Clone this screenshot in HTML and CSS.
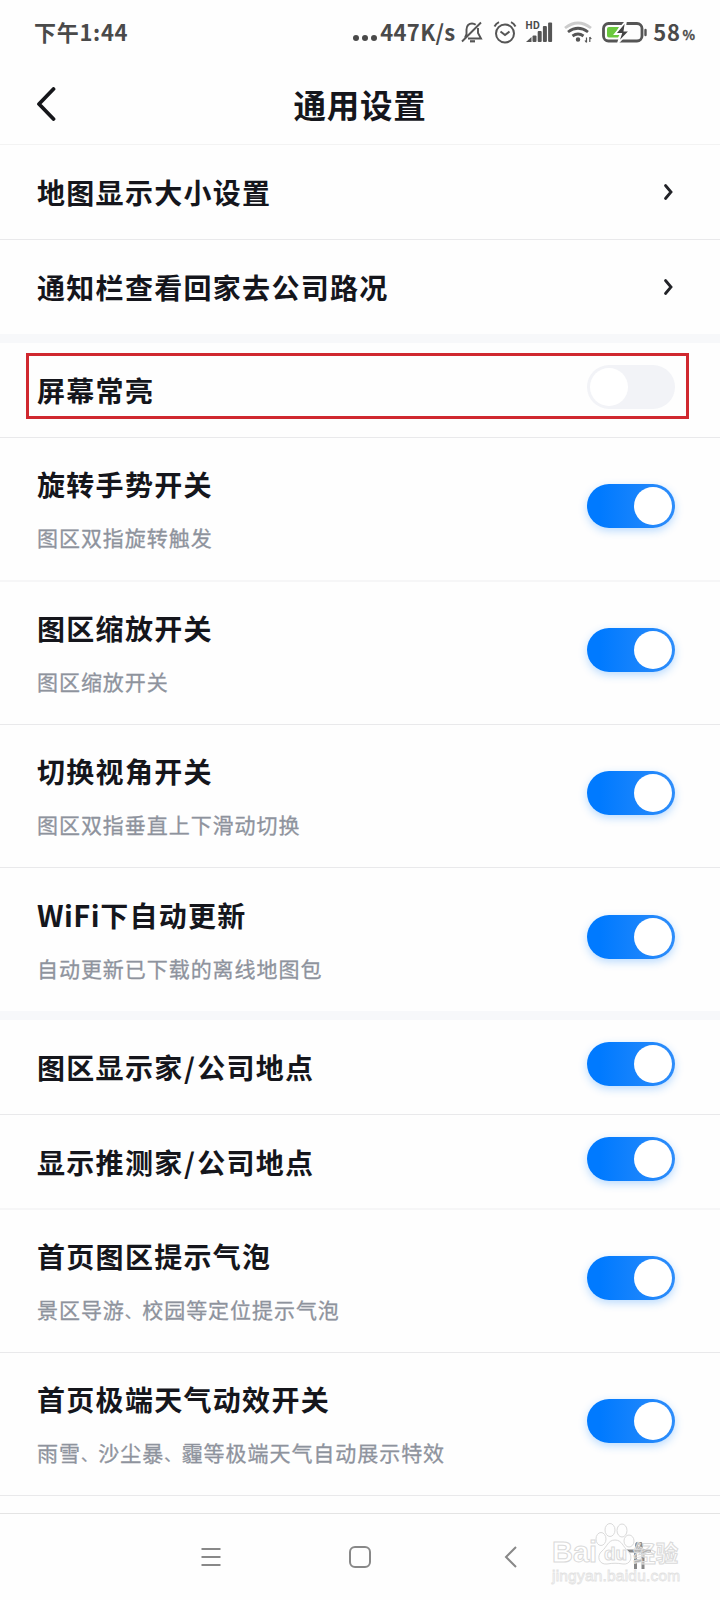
FILE: index.html
```html
<!DOCTYPE html>
<html lang="zh-CN">

<head>
    <meta charset="UTF-8">
    <meta name="viewport" content="width=device-width, initial-scale=1.0">
    <title>通用设置</title>
    <link rel="stylesheet" href="styles.css">
</head>

<body>

    <div class="status-bar">
        <span class="time">下午1:44</span>
        <div class="status-right">
            <span class="dots"><i></i><i></i><i></i></span>
            <span class="speed">447K/s</span>
            <!-- muted bell -->
            <svg class="bell" width="22" height="22" viewBox="0 0 22 22" fill="none" stroke="#555" stroke-width="1.9">
                <path d="M4 16.500L5.500 13V8.500C5.500 4.500 8 2.500 11 2.500C12.500 2.500 13.700 3 14.700 3.800M17 7V12L20 17.500H7M1 20.500L20 1.500" />
                <path d="M9 20.300H14" stroke-width="2.200" />
            </svg>
            <!-- alarm -->
            <svg class="alarm" width="24" height="23" viewBox="0 0 24 23" fill="none" stroke="#555" stroke-width="2">
                <circle cx="12" cy="12.500" r="9" />
                <path d="M1.500 5.500Q3 2.500 6 1.200M22.500 5.500Q21 2.500 18 1.200M7.500 10.500L12 14L16.500 10.500" />
            </svg>
            <div class="signal">
                <span class="hd">HD</span>
                <svg width="28" height="22" viewBox="0 0 28 22" fill="#555">
                    <path d="M1 21L6.500 16V21Z" />
                    <rect x="7.500" y="14.500" width="4" height="6.500" rx="1" />
                    <rect x="12.700" y="10" width="4" height="11" rx="1" />
                    <rect x="17.900" y="5" width="4" height="16" rx="1" />
                    <rect x="23.100" y="1.500" width="4" height="19.500" rx="1" />
                </svg>
            </div>
            <svg class="wifi" width="28" height="22" viewBox="0 0 28 22" fill="none" stroke="#555" stroke-width="2.800">
                <path d="M1 7Q14 -3 27 7" stroke="#ccc" />
                <path d="M4 11Q14 3.500 24 11M8.500 15Q14 11 19.500 15" />
                <circle cx="14" cy="18.500" r="1.500" fill="#555" stroke-width="1.500" />
                <path d="M22.500 16.500V21.500M25.800 16V21M21 19.500L22.500 21.500M27.300 18L25.800 16" stroke-width="1.200" />
            </svg>
            <svg class="battery" width="46" height="22" viewBox="0 0 46 22">
                <rect x="1.500" y="2.500" width="38.500" height="17.500" rx="5" fill="none" stroke="#555" stroke-width="2.800" />
                <path d="M7 6H17L13 13H18L16 16.500H7Q5 16.500 5 14.500V8Q5 6 7 6Z" fill="#6ac83e" />
                <path d="M24 0L13 13H19L16 22L28 9.500H22.500Z" fill="#444" stroke="#fff" stroke-width="1.800" />
                <path d="M43.500 9V14" stroke="#555" stroke-width="2.400" stroke-linecap="round" />
            </svg>
            <span class="percent">58</span><span class="unit">%</span>
        </div>
    </div>

    <div class="header">
        <svg class="back" width="20" height="34" viewBox="0 0 20 34" fill="none" stroke="#15161a" stroke-width="3.800" stroke-linecap="round" stroke-linejoin="round">
            <path d="M17.500 2L3 17L17.500 32" />
        </svg>
        <h1>通用设置</h1>
    </div>

    <div class="group">
        <div class="row">
            <p class="title">地图显示大小设置</p>
            <svg class="arrow" width="10" height="18" viewBox="0 0 10 18"><path d="M2.500 2.500L8 9L2.500 15.500" /></svg>
        </div>
        <div class="row">
            <p class="title">通知栏查看回家去公司路况</p>
            <svg class="arrow" width="10" height="18" viewBox="0 0 10 18"><path d="M2.500 2.500L8 9L2.500 15.500" /></svg>
        </div>
    </div>

    <div class="group">
        <div class="row marked">
            <p class="title">屏幕常亮</p>
            <div class="switch"></div>
        </div>
        <div class="row tall first">
            <div>
                <p class="title">旋转手势开关</p>
                <p class="desc">图区双指旋转触发</p>
            </div>
            <div class="switch on"></div>
        </div>
        <div class="row tall">
            <div>
                <p class="title">图区缩放开关</p>
                <p class="desc">图区缩放开关</p>
            </div>
            <div class="switch on"></div>
        </div>
        <div class="row tall">
            <div>
                <p class="title">切换视角开关</p>
                <p class="desc">图区双指垂直上下滑动切换</p>
            </div>
            <div class="switch on"></div>
        </div>
        <div class="row tall">
            <div>
                <p class="title"><span class="latin">WiFi</span>下自动更新</p>
                <p class="desc">自动更新已下载的离线地图包</p>
            </div>
            <div class="switch on"></div>
        </div>
    </div>

    <div class="group last">
        <div class="row">
            <p class="title">图区显示家<span class="slash">/</span>公司地点</p>
            <div class="switch on"></div>
        </div>
        <div class="row soft">
            <p class="title">显示推测家<span class="slash">/</span>公司地点</p>
            <div class="switch on"></div>
        </div>
        <div class="row tall">
            <div>
                <p class="title">首页图区提示气泡</p>
                <p class="desc">景区导游<span class="comma">、</span>校园等定位提示气泡</p>
            </div>
            <div class="switch on"></div>
        </div>
        <div class="row tall">
            <div>
                <p class="title">首页极端天气动效开关</p>
                <p class="desc">雨雪<span class="comma">、</span>沙尘暴<span class="comma">、</span>霾等极端天气自动展示特效</p>
            </div>
            <div class="switch on"></div>
        </div>
    </div>

    <div class="nav-bar">
        <svg width="22" height="22" viewBox="0 0 22 22"><path d="M1.500 3H20.500M1.500 11H20.500M1.500 19H20.500" /></svg>
        <svg width="22" height="22" viewBox="0 0 22 22"><rect x="1" y="1" width="20" height="20" rx="5" /></svg>
        <svg width="22" height="22" viewBox="0 0 22 22"><path d="M16 1L6 11L16 21" /></svg>
        <svg class="person" width="26" height="28" viewBox="0 0 26 28">
            <circle cx="13" cy="3.500" r="2.500" />
            <path d="M1 9H25M9.500 9V27M17 9V27M9.500 18.500H17" />
        </svg>

        <!-- watermark over the bar -->
        <div class="watermark">
            <div class="brand">
                <span>Bai</span>
                <svg width="40" height="44" viewBox="0 0 40 44">
                    <ellipse cx="6" cy="17" rx="5" ry="6.500" />
                    <ellipse cx="15" cy="8" rx="5" ry="6.500" />
                    <ellipse cx="27" cy="8.500" rx="5" ry="6.500" />
                    <ellipse cx="34" cy="19" rx="5" ry="6" />
                    <path d="M20 18C27 18 28 25 33 29C39 35 35 43 28 42C22 41 18 41 12 42C4 43 1 34 7 29C12 25 13 18 20 18Z" />
                    <text x="9" y="38">du</text>
                </svg>
                <span class="cn">经验</span>
            </div>
            <p class="site">jingyan.baidu.com</p>
        </div>
    </div>

</body>

</html>
```
FILE: styles.css
```css
* {
    box-sizing: border-box;
}

body {
    margin: 0;
    width: 720px;
    height: 1600px;
    overflow: hidden;
    background: #fefefe;
    color: #15161c;
    font-family: "Noto Sans CJK SC", sans-serif;
}

p,
h1 {
    margin: 0;
}

svg {
    display: block;
    flex: none;
}

/* status bar */
.status-bar {
    display: flex;
    justify-content: space-between;
    height: 64px;
    padding: 0 25px 0 34px;
    color: #4a4a4a;
    font-weight: bold;
}

.time {
    font-size: 22px;
    line-height: 62px;
    letter-spacing: 0.7px;
    white-space: nowrap;
}

.status-right {
    display: flex;
    align-items: center;
    height: 64px;
}

.dots {
    display: flex;
    gap: 3px;
    padding-top: 12px;
    margin-right: 3px;
}

.dots i {
    width: 6px;
    height: 6px;
    border-radius: 50%;
    background: #4a4a4a;
}

.speed {
    width: 76px;
    padding-bottom: 2px;
    font-size: 22px;
    letter-spacing: 0.3px;
    white-space: nowrap;
}

.bell {
    margin-left: 5px;
}

.alarm {
    margin-left: 10px;
}

.signal {
    position: relative;
    margin-left: 8px;
}

.hd {
    position: absolute;
    left: 0;
    top: -1px;
    font-size: 10px;
    line-height: 9px;
}

.wifi {
    margin-left: 11px;
}

.battery {
    margin-left: 10px;
}

.percent {
    margin-left: 5px;
    padding-bottom: 2px;
    font-size: 22px;
    letter-spacing: 0.6px;
}

.unit {
    margin-left: 2px;
    padding-top: 4px;
    font-size: 13px;
    -webkit-text-stroke: 0.3px #4a4a4a;
}

/* title bar */
.header {
    display: flex;
    align-items: center;
    height: 81px;
    padding: 0 36px;
    border-bottom: 1px solid #f3f3f3;
}

.back {
    margin-bottom: 1px;
}

h1 {
    flex: 1;
    padding-right: 20px;
    font-size: 32.5px;
    line-height: 40px;
    letter-spacing: 0.8px;
    text-align: center;
}

/* settings list */
.group {
    border-bottom: 9px solid #f7f8fa;
}

.group.last {
    border-bottom: 0;
}

.row {
    display: flex;
    justify-content: space-between;
    align-items: center;
    height: 95px;
    padding: 0 45px 0 37px;
    border-bottom: 1px solid #e9e9eb;
}

.row:last-child {
    height: 94px;
    border-bottom: 0;
}

.row.tall {
    height: 143px;
}

.row.first {
    height: 144px;
    border-bottom: 2px solid #f6f6f7;
}

.row.soft {
    border-bottom: 2px solid #f6f6f7;
}

.last .row:last-child {
    border-bottom: 1px solid #e9e9eb;
}

.title {
    font-size: 28px;
    line-height: 40px;
    font-weight: bold;
    letter-spacing: 1.3px;
    white-space: nowrap;
}

.desc {
    height: 40px;
    margin-top: 13px;
    color: #8e939d;
    font-size: 21px;
    line-height: 40px;
    letter-spacing: 0.95px;
    white-space: nowrap;
    -webkit-text-stroke: 0.3px #8e939d;
}

.tall .title {
    padding-top: 2px;
}

.tall.first .title {
    padding-top: 3px;
}

.latin {
    font-size: 29px;
    letter-spacing: 0.5px;
}

.slash {
    margin: 0 1px 0 0.5px;
}

.comma {
    font-size: 16.5px;
    line-height: 20px;
}

.arrow {
    margin-right: 2px;
    fill: none;
    stroke: #222328;
    stroke-width: 2.8px;
    stroke-linecap: round;
}

.switch {
    width: 88px;
    height: 44px;
    margin-bottom: 6px;
    padding: 3px;
    border-radius: 22px;
    background: #f2f3f7;
}

.switch::before {
    content: "";
    display: block;
    width: 38px;
    height: 38px;
    border-radius: 50%;
    background: #fff;
}

.switch.on {
    background: linear-gradient(90deg, #007aff 15%, #2e8dfa);
    box-shadow: 0 3px 8px rgba(30, 140, 255, 0.3);
}

.switch.on::before {
    margin-left: auto;
}

/* red frame around the first switch row */
.marked {
    position: relative;
}

.marked::after {
    content: "";
    position: absolute;
    box-sizing: border-box;
    left: 26px;
    top: 10px;
    width: 663px;
    height: 66px;
    border: 3px solid #d0282f;
}

/* bottom navigation */
.nav-bar {
    position: relative;
    display: flex;
    gap: 127px;
    margin-top: 17px;
    height: 87px;
    padding: 32px 0 0 200px;
    border-top: 1px solid #e4e4e4;
}

.nav-bar > svg {
    fill: none;
    stroke: #888;
    stroke-width: 2px;
}

.nav-bar .person {
    margin: -4px 0 0 -23px;
    stroke-width: 3px;
}

.nav-bar svg:nth-child(3) {
    margin-left: 2px;
}

.watermark {
    position: absolute;
    left: 552px;
    top: 8px;
    color: #fff;
    -webkit-text-stroke: 1px #dadada;
}

.brand {
    display: flex;
    align-items: flex-end;
    font-family: "Liberation Sans", sans-serif;
    font-size: 29px;
    line-height: 28px;
    font-weight: bold;
}

.brand svg {
    margin: 0 -2px 0 -2px;
    stroke: #dadada;
    stroke-width: 1px;
    fill: #fefefe;
}

.brand text {
    font-size: 19px;
    -webkit-text-stroke: 0;
}

.brand .cn {
    font-family: "Noto Sans CJK SC", sans-serif;
    font-size: 22.5px;
    color: rgba(255, 255, 255, 0.4);
}

.site {
    font-family: "Liberation Sans", sans-serif;
    font-size: 15.5px;
    line-height: 20px;
    letter-spacing: 0.2px;
    -webkit-text-stroke: 0.8px #e2e2e2;
}
```
